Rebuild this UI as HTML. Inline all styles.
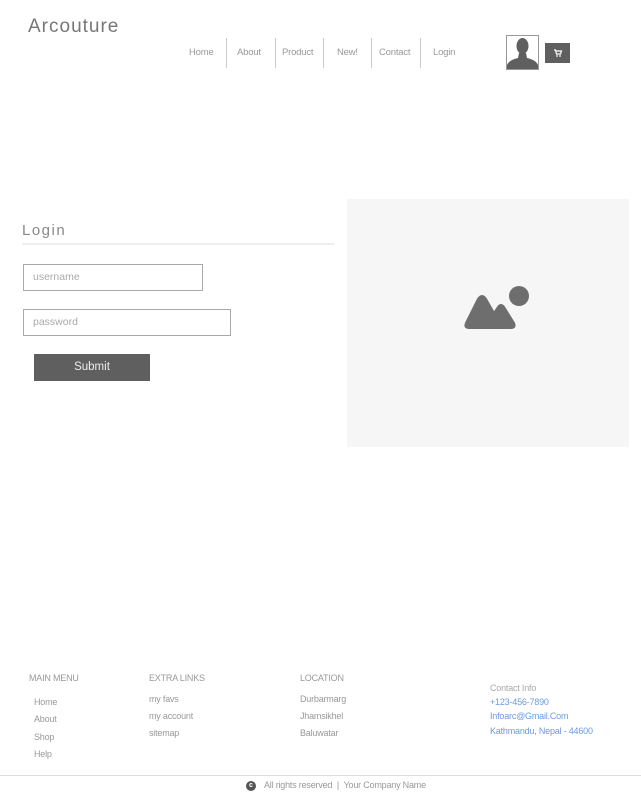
<!DOCTYPE html>
<html><head><meta charset="utf-8"><style>
*{margin:0;padding:0;box-sizing:border-box}
body{width:641px;height:809px;background:#fff;font-family:"Liberation Sans",sans-serif;position:relative;overflow:hidden;color:#888}
.a{position:absolute;white-space:nowrap}
.nav{font-size:9.5px;color:#999;top:47px;letter-spacing:-0.2px}
.sep{position:absolute;top:38px;width:1px;height:30px;background:#ccc}
.f{font-size:9px;color:#999;letter-spacing:-0.2px}
.b{font-size:9px;color:#6a9be0;letter-spacing:-0.2px}
</style></head><body>
<div class="a" style="left:28px;top:16px;font-size:19px;color:#777;letter-spacing:1px">Arcouture</div>
<div class="a nav" style="left:189px">Home</div>
<div class="sep" style="left:226px"></div>
<div class="a nav" style="left:237px">About</div>
<div class="sep" style="left:275px"></div>
<div class="a nav" style="left:282px">Product</div>
<div class="sep" style="left:323px"></div>
<div class="a nav" style="left:337px">New!</div>
<div class="sep" style="left:371px"></div>
<div class="a nav" style="left:379px">Contact</div>
<div class="sep" style="left:420px"></div>
<div class="a nav" style="left:433px">Login</div>
<div class="a" style="left:506px;top:35px;width:33px;height:35px;border:1px solid #999;background:#fff;overflow:hidden">
<svg width="31" height="33" viewBox="0 0 31 33"><ellipse cx="15.5" cy="10" rx="6" ry="8" fill="#5f5f5f"/><path d="M12 17 L19 17 L20 22 Q29 24 31 29 L31 33 L0 33 L0 29 Q2 24 11 22Z" fill="#5f5f5f"/></svg></div>
<div class="a" style="left:545px;top:43px;width:25px;height:20px;background:#5f5f5f">
<svg width="25" height="20" viewBox="0 0 25 20"><path d="M9 7h1.5l1 4h4l1-3h-5.5" stroke="#fff" stroke-width="1.2" fill="none"/><circle cx="12" cy="13" r=".9" fill="#fff"/><circle cx="15" cy="13" r=".9" fill="#fff"/></svg></div>

<div class="a" style="left:22px;top:222px;font-size:15px;color:#888;letter-spacing:1.5px">Login</div>
<div class="a" style="left:22px;top:243px;width:312px;height:2px;background:#eee"></div>
<div class="a" style="left:23px;top:264px;width:180px;height:27px;border:1px solid #aaa;font-size:10.5px;color:#aaa;padding:6px 9px">username</div>
<div class="a" style="left:23px;top:309px;width:208px;height:27px;border:1px solid #aaa;font-size:10.5px;color:#aaa;padding:6px 9px">password</div>
<div class="a" style="left:34px;top:354px;width:116px;height:27px;background:#5f5f5f;color:#eee;font-size:11.5px;text-align:center;line-height:27px">Submit</div>

<div class="a" style="left:347px;top:199px;width:282px;height:248px;background:#f6f6f6">
<svg class="a" style="left:115px;top:83px" width="70" height="50" viewBox="0 0 70 50"><circle cx="57" cy="14" r="10" fill="#6e6e6e"/><path d="M7 46 Q2 46 4 41 L16 17 Q20 11 24 17 L32 31 L36 25 Q39 21 42 25 L52 41 Q54 46 49 46Z" fill="#6e6e6e" stroke="#6e6e6e" stroke-width="2" stroke-linejoin="round"/></svg></div>

<div class="a f" style="left:29px;top:673px">MAIN MENU</div>
<div class="a f" style="left:34px;top:697px">Home</div>
<div class="a f" style="left:34px;top:714px">About</div>
<div class="a f" style="left:34px;top:732px">Shop</div>
<div class="a f" style="left:34px;top:749px">Help</div>
<div class="a f" style="left:149px;top:673px">EXTRA LINKS</div>
<div class="a f" style="left:149px;top:694px">my favs</div>
<div class="a f" style="left:149px;top:711px">my account</div>
<div class="a f" style="left:149px;top:728px">sitemap</div>
<div class="a f" style="left:300px;top:673px">LOCATION</div>
<div class="a f" style="left:300px;top:694px">Durbarmarg</div>
<div class="a f" style="left:300px;top:711px">Jhamsikhel</div>
<div class="a f" style="left:300px;top:728px">Baluwatar</div>
<div class="a f" style="left:490px;top:683px;color:#aaa">Contact Info</div>
<div class="a b" style="left:490px;top:697px">+123-456-7890</div>
<div class="a b" style="left:490px;top:711px">Infoarc@Gmail.Com</div>
<div class="a b" style="left:490px;top:726px">Kathmandu, Nepal - 44600</div>
<div class="a" style="left:0;top:775px;width:641px;height:1px;background:#ddd"></div>
<div class="a" style="left:246px;top:781px;width:10px;height:10px;border-radius:50%;background:#555;color:#fff;font-size:7px;text-align:center;line-height:10px;font-weight:bold">c</div>
<div class="a f" style="left:264px;top:780px">All rights reserved &nbsp;| &nbsp;Your Company Name</div>
</body></html>
